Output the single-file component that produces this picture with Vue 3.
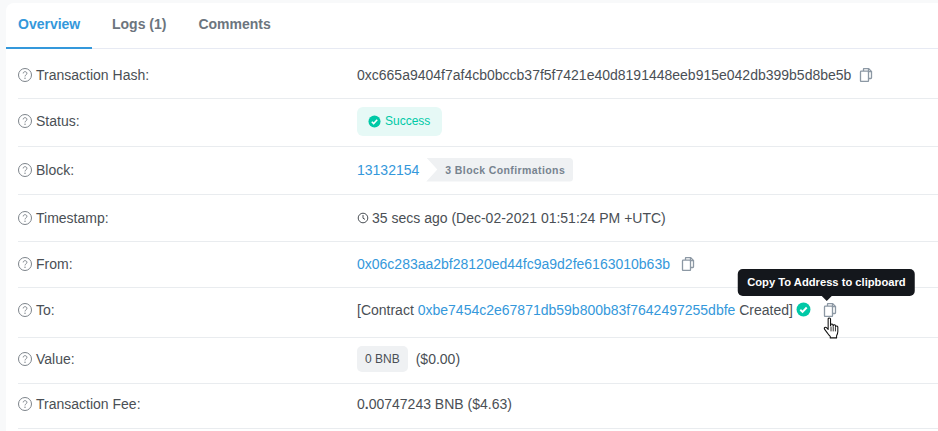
<template>
  <div class="page">
    <div class="card">
      <div class="tabs">
        <a class="tab active">Overview</a>
        <a class="tab">Logs (1)</a>
        <a class="tab">Comments</a>
      </div>

      <div class="rows">
        <div class="row r-hash">
          <div class="label"><HelpIcon />Transaction Hash:</div>
          <div class="value">
            <span>0xc665a9404f7af4cb0bccb37f5f7421e40d8191448eeb915e042db399b5d8be5b</span>
            <svg class="copy copy-hash" viewBox="0 0 14 14"><path d="M4.500 3V1.200a.7.7 0 0 1 .7-.7h4.300l3 3v6.300a.7.7 0 0 1-.7.7H9.500" /><path d="M9.500 .7v3h3" /><rect x="1.500" y="3.200" width="8" height="10.300" rx=".8" /></svg>
          </div>
        </div>

        <div class="row r-status">
          <div class="label"><HelpIcon />Status:</div>
          <div class="value">
            <span class="success">
              <svg class="check" viewBox="0 0 14 14"><circle cx="7" cy="7" r="6.500" fill="#00c9a7" /><path d="M4.100 7.200l2 2 3.800-4" fill="none" stroke="#fff" stroke-width="1.700" /></svg>
              Success
            </span>
          </div>
        </div>

        <div class="row r-block">
          <div class="label"><HelpIcon />Block:</div>
          <div class="value">
            <a class="link">13132154</a>
            <span class="confirm">3 Block Confirmations</span>
          </div>
        </div>

        <div class="row r-time">
          <div class="label"><HelpIcon />Timestamp:</div>
          <div class="value">
            <svg class="clock" viewBox="0 0 12 12"><circle cx="6" cy="6" r="4.800" /><path d="M6 3v3.200l2 1.200" /></svg>
            <span>35 secs ago (Dec-02-2021 01:51:24 PM +UTC)</span>
          </div>
        </div>

        <div class="row r-from">
          <div class="label"><HelpIcon />From:</div>
          <div class="value">
            <a class="link">0x06c283aa2bf28120ed44fc9a9d2fe6163010b63b</a>
            <svg class="copy copy-from" viewBox="0 0 14 14"><path d="M4.500 3V1.200a.7.7 0 0 1 .7-.7h4.300l3 3v6.300a.7.7 0 0 1-.7.7H9.500" /><path d="M9.500 .7v3h3" /><rect x="1.500" y="3.200" width="8" height="10.300" rx=".8" /></svg>
          </div>
        </div>

        <div class="row r-to">
          <div class="label"><HelpIcon />To:</div>
          <div class="value">
            <span>[Contract <a class="link">0xbe7454c2e67871db59b800b83f7642497255dbfe</a> Created]</span>
            <svg class="check check-to" viewBox="0 0 14 14"><circle cx="7" cy="7" r="6.500" fill="#00c9a7" /><path d="M4 7.200l2.100 2 3.900-4.100" fill="none" stroke="#fff" stroke-width="1.800" /></svg>
            <span class="copy-wrap">
              <svg class="copy copy-to" viewBox="0 0 14 14"><path d="M4.500 3V1.200a.7.7 0 0 1 .7-.7h4.300l3 3v6.300a.7.7 0 0 1-.7.7H9.500" /><path d="M9.500 .7v3h3" /><rect x="1.500" y="3.200" width="8" height="10.300" rx=".8" /></svg>
              <span class="tooltip">Copy To Address to clipboard</span>
              <svg class="cursor" viewBox="0 0 17 24"><path d="M5 2.200c0-1.600 2.500-1.600 2.500 0v7l.2-1c.4-1.300 2.300-1.100 2.400.3l.1 1 .2-.6c.5-1.200 2.200-1 2.300.3l.1.8c.5-1 2.200-.8 2.300.6v4.600c0 2-.6 3.100-1.300 4.400v2.200H7.200v-1.600c-1.200-1-1.900-2-2.900-3.400L1.200 12.700c-.9-1.500.9-2.700 2.100-1.500L5 13z" fill="#fff" stroke="#111" stroke-width="1.100" stroke-linejoin="round" /><path d="M8 10v5M10.300 10v5M12.600 10.500V15" fill="none" stroke="#111" stroke-width=".9" /></svg>
            </span>
          </div>
        </div>

        <div class="row r-amount">
          <div class="label"><HelpIcon />Value:</div>
          <div class="value">
            <span class="chip">0 BNB</span>
            <span>($0.00)</span>
          </div>
        </div>

        <div class="row r-fee">
          <div class="label"><HelpIcon />Transaction Fee:</div>
          <div class="value"><span>0<b class="dot">.</b>00747243 BNB ($4.63)</span></div>
        </div>
      </div>
    </div>
  </div>
</template>

<script setup>
import { h } from 'vue'

const HelpIcon = () =>
  h('svg', { class: 'help', viewBox: '0 0 14 14', style: 'width:14px;height:14px;margin-right:4px;flex:none' }, [
    h('circle', { cx: 7, cy: 7, r: 6.500, fill: 'none', stroke: '#7d848b', 'stroke-width': 1 }),
    h('path', { d: 'M5.200 5.400c0-2.300 3.700-2.300 3.700 0 0 1.500-1.900 1.500-1.900 3', fill: 'none', stroke: '#7d848b', 'stroke-width': 1 }),
    h('circle', { cx: 7, cy: 10.300, r: 0.700, fill: '#7d848b' }),
  ])
</script>

<style>
html,
body {
  margin: 0;
  background: #f8f9fa;
}
</style>

<style scoped>
.page {
  width: 938px;
  height: 431px;
  overflow: hidden;
  padding: 3px 0 0 6px;
  box-sizing: border-box;
  font-family: "Liberation Sans", Arial, sans-serif;
  font-size: 14px;
  color: #4a4f55;
}

.card {
  background: #fff;
  border-radius: 8px 0 0 0;
  height: 100%;
}

.tabs {
  display: flex;
  height: 45px;
  border-bottom: 1px solid #e7eaf3;
  font-weight: 700;
  color: #6c757e;
}

.tab {
  display: flex;
  align-items: center;
  padding: 0 12px 4px;
  box-sizing: border-box;
  height: 46px;
  margin-right: 8px;
}

.tab.active {
  color: #3498db;
  border-bottom: 2px solid #3498db;
  width: 86px;
  padding-bottom: 3px;
}

.rows {
  padding-left: 12px;
}

.row {
  display: flex;
  align-items: center;
  border-bottom: 1px solid #e9ecef;
  box-sizing: border-box;
}

.r-hash { height: 50px; padding-top: 2px; }
.r-status { height: 48px; padding-bottom: 3px; }
.r-block { height: 48px; padding-bottom: 2px; }
.r-time { height: 47px; }
.r-from { height: 46px; padding-bottom: 2px; }
.r-to { height: 50px; padding-bottom: 6px; }
.r-amount { height: 46px; padding-bottom: 4px; }
.r-fee { height: 45px; padding-bottom: 4px; }

.label {
  width: 339px;
  flex: none;
  display: flex;
  align-items: center;
}

.value {
  display: flex;
  align-items: center;
  white-space: nowrap;
}

.link {
  color: #3498db;
}

.copy {
  width: 14px;
  height: 14px;
  fill: none;
  stroke: #8c98a4;
  stroke-width: 1.300;
  flex: none;
}

.copy-hash { margin-left: 8px; }
.copy-from { margin-left: 11px; }
.copy-to { display: block; }

.copy-wrap {
  position: relative;
  margin-left: 12px;
}

.tooltip {
  position: absolute;
  left: calc(50% - 3.500px);
  bottom: 21px;
  transform: translateX(-50%);
  background: #14171c;
  color: #fff;
  font-size: 11.200px;
  font-weight: 700;
  line-height: 27px;
  padding: 0 9px;
  border-radius: 5px;
  white-space: nowrap;
}

.tooltip::after {
  content: "";
  position: absolute;
  left: 50%;
  bottom: -5px;
  margin-left: -6px;
  border: solid transparent;
  border-width: 6px 6px 0;
  border-top-color: #14171c;
}

.cursor {
  position: absolute;
  left: 0;
  top: 14px;
  width: 17px;
  height: 23px;
}

.success {
  display: flex;
  align-items: center;
  gap: 4px;
  background: #e6f9f6;
  color: #00c9a7;
  font-size: 12px;
  height: 29px;
  padding: 0 11px;
  width: 85px;
  box-sizing: border-box;
  border-radius: 6px;
}

.check {
  width: 13px;
  height: 13px;
  flex: none;
}

.check-to {
  width: 15px;
  height: 15px;
  margin-left: 3px;
}

.confirm {
  display: flex;
  align-items: center;
  height: 24px;
  margin-left: 7px;
  padding: 0 8px 0 19px;
  background: #eff1f3;
  color: #77838f;
  font-size: 10.500px;
  font-weight: 700;
  letter-spacing: 0.400px;
  border-radius: 0 4px 4px 0;
  clip-path: polygon(0 0, 100% 0, 100% 100%, 0 100%, 11px 50%);
}

.clock {
  width: 12px;
  height: 12px;
  margin-right: 3px;
  fill: none;
  stroke: #4a4f55;
  stroke-width: 1;
}

.chip {
  background: #eff1f3;
  font-size: 12px;
  height: 26px;
  display: flex;
  align-items: center;
  padding: 0 8px;
  border-radius: 5px;
  margin-right: 8px;
}

.dot {
  font-weight: 700;
}
</style>
